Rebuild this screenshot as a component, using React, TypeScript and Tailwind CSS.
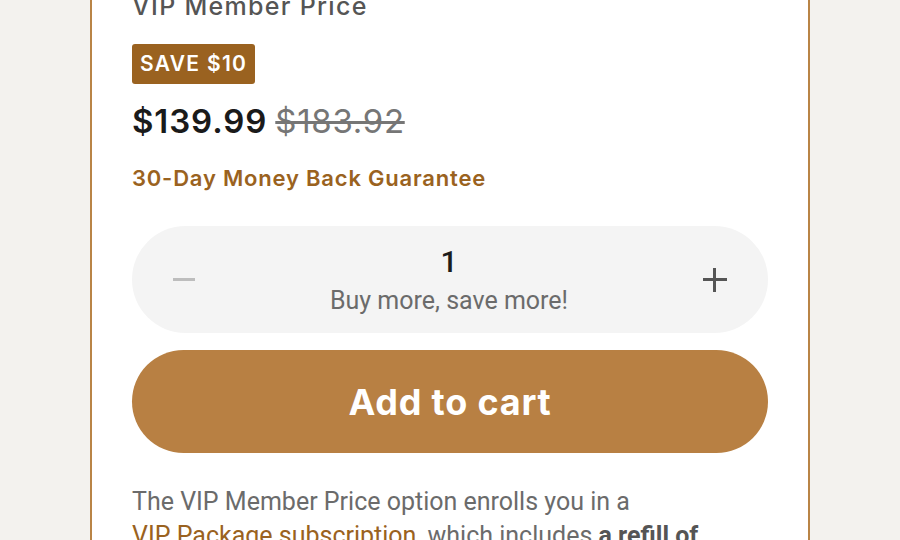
import React, { useState } from "react";

const inter = { fontFamily: "Inter, 'Noto Sans', sans-serif" };
const roboto = { fontFamily: "Roboto, 'Noto Sans', sans-serif" };

function QuantityPicker() {
  const [qty, setQty] = useState(1);
  return (
    <div className="flex h-[107px] items-center justify-between rounded-full bg-[#f4f4f4] px-[40px]">
      <button
        className="flex h-[24px] w-[24px] items-center justify-center"
        onClick={() => setQty((q) => Math.max(1, q - 1))}
        aria-label="Decrease quantity"
      >
        <span className="block h-[3px] w-[22px] bg-[#bdbdbd]" />
      </button>
      <div className="flex flex-col items-center">
        <span className="text-[30px] leading-[36px] font-medium text-[#1c1c1c]" style={roboto}>
          {qty}
        </span>
        <span className="mt-[6px] text-[25px] leading-[30px] text-[#6b6b6b]" style={roboto}>
          Buy more, save more!
        </span>
      </div>
      <button
        className="relative flex h-[26px] w-[26px] items-center justify-center"
        onClick={() => setQty((q) => q + 1)}
        aria-label="Increase quantity"
      >
        <span className="absolute h-[3px] w-[24px] bg-[#555555]" />
        <span className="absolute h-[24px] w-[3px] bg-[#555555]" />
      </button>
    </div>
  );
}

export default function App() {
  return (
    <div className="h-[540px] w-[900px] overflow-hidden bg-[#f3f2ee]">
      <div className="mx-auto flex h-full w-[720px] flex-col border-x-2 border-[#b98446] bg-white px-[40px]">
        <div className="-mt-[10px] flex flex-col">
          <h2
            className="text-[25px] leading-[32px] font-medium tracking-[1.3px] text-[#555555]"
            style={inter}
          >
            VIP Member Price
          </h2>
          <div className="mt-[22px] flex">
            <span
              className="flex h-[40px] items-center rounded-[3px] bg-[#9a6220] px-[8px] text-[21px] font-semibold tracking-[1.3px] text-white"
              style={inter}
            >
              SAVE $10
            </span>
          </div>
          <div className="mt-[15px] flex items-baseline gap-[8px]" style={inter}>
            <span className="text-[33px] leading-[44px] font-semibold tracking-[0.9px] text-[#1a1a1a]">
              $139.99
            </span>
            <span className="text-[33px] leading-[44px] tracking-[0.7px] text-[#767676] line-through decoration-[3px]">
              $183.92
            </span>
          </div>
          <p
            className="mt-[19px] text-[22px] leading-[32px] font-semibold tracking-[0.8px] text-[#9a6220]"
            style={inter}
          >
            30-Day Money Back Guarantee
          </p>
          <div className="mt-[32px]">
            <QuantityPicker />
          </div>
          <button
            className="mt-[17px] flex h-[103px] w-full items-center justify-center rounded-full bg-[#b88043] text-[36px] font-bold tracking-[0.8px] text-white"
            style={inter}
          >
            Add to cart
          </button>
          <p className="mt-[32px] text-[25px] leading-[34px] text-[#6b6b6b]" style={roboto}>
            The VIP Member Price option enrolls you in a
            <br />
            <a className="text-[#9a6220] underline underline-offset-[3px]" href="#">
              VIP Package subscription
            </a>
            , which includes <strong className="font-bold text-[#555555]">a refill of</strong>{" "}
            everything you love, delivered every month.
          </p>
        </div>
      </div>
    </div>
  );
}
